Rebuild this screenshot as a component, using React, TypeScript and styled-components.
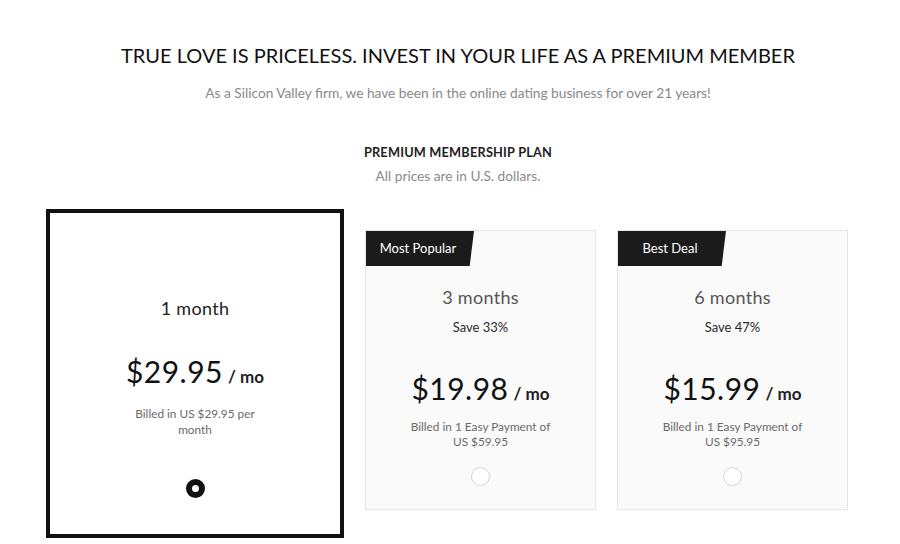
import React from "react";
import styled, { createGlobalStyle, css } from "styled-components";

const GlobalStyle = createGlobalStyle`
  html, body { margin: 0; padding: 0; background: #ffffff; }
  body { font-family: "Lato", "Open Sans", sans-serif; color: #222; }
`;

const Page = styled.div`
  width: 900px;
  height: 544px;
  overflow: hidden;
  background: #fff;
`;

const Header = styled.header`
  display: flex;
  flex-direction: column;
  align-items: center;
  padding: 42px 0 0 16px;
`;

const Headline = styled.h1`
  margin: 0;
  font-family: "Lato", sans-serif;
  font-weight: 400;
  font-size: 20px;
  line-height: 26px;
  color: #111;
`;

const Tagline = styled.p`
  margin: 17px 0 0;
  font-size: 13.7px;
  line-height: 16px;
  color: #888;
`;

const PlanTitle = styled.h2`
  margin: 43px 0 0;
  font-size: 12.75px;
  font-weight: 700;
  line-height: 16px;
  letter-spacing: 0.2px;
  color: #222;
`;

const PlanNote = styled.p`
  margin: 8px 0 0;
  font-size: 13.7px;
  line-height: 16px;
  color: #8a8a8a;
`;

const Cards = styled.div`
  display: flex;
  align-items: flex-start;
  gap: 21px;
  padding: 25px 0 0 46px;
`;

const Card = styled.div<{ $selected?: boolean }>`
  position: relative;
  box-sizing: border-box;
  display: flex;
  flex-direction: column;
  align-items: center;
  ${(p) =>
    p.$selected
      ? css`
          width: 298px;
          height: 329px;
          border: 4px solid #111;
          background: #fff;
          padding-top: 84px;
        `
      : css`
          width: 231px;
          height: 280px;
          margin-top: 21px;
          border: 1px solid #e6e6e6;
          background: #fafafa;
          padding-top: 55px;
        `}
`;

const Badge = styled.div`
  position: absolute;
  top: 0;
  left: 0;
  width: 108px;
  height: 35px;
  background: #1b1b1b;
  color: #fff;
  font-size: 13px;
  line-height: 35px;
  padding-right: 4px;
  box-sizing: border-box;
  text-align: center;
  clip-path: polygon(0 0, 100% 0, 96% 100%, 0 100%);
`;

const Term = styled.div<{ $selected?: boolean }>`
  font-size: 18px;
  line-height: 22px;
  color: ${(p) => (p.$selected ? "#222" : "#555")};
  letter-spacing: 0.3px;
`;

const Save = styled.div`
  margin-top: 10px;
  font-size: 13px;
  line-height: 18px;
  color: #2a2a2a;
`;

const PriceRow = styled.div`
  margin-top: 34px;
  display: flex;
  align-items: baseline;
  gap: 5px;
  line-height: 36px;
  color: #111;
`;

const Amount = styled.span`
  font-size: 30px;
  font-weight: 400;
  letter-spacing: 0.5px;
`;

const Unit = styled.span`
  font-size: 17px;
  font-weight: 700;
  color: #222;
`;

const Billed = styled.div<{ $selected?: boolean }>`
  margin-top: ${(p) => (p.$selected ? "11px" : "7px")};
  width: 150px;
  text-align: center;
  font-size: 11.8px;
  line-height: ${(p) => (p.$selected ? "16px" : "15px")};
  color: #6a6a6a;
`;

const Radio = styled.span<{ $selected?: boolean }>`
  display: block;
  box-sizing: border-box;
  width: 19px;
  height: 19px;
  border-radius: 50%;
  ${(p) =>
    p.$selected
      ? css`
          margin-top: 41px;
          border: 6px solid #111;
          background: #fff;
        `
      : css`
          margin-top: 18px;
          border: 1px solid #d4d4d4;
          background: #fff;
        `}
`;

type Plan = {
  term: string;
  save?: string;
  price: string;
  billed: string;
  badge?: string;
  selected?: boolean;
};

const plans: Plan[] = [
  { term: "1 month", price: "$29.95", billed: "Billed in US $29.95 per month", selected: true },
  { term: "3 months", save: "Save 33%", price: "$19.98", billed: "Billed in 1 Easy Payment of US $59.95", badge: "Most Popular" },
  { term: "6 months", save: "Save 47%", price: "$15.99", billed: "Billed in 1 Easy Payment of US $95.95", badge: "Best Deal" },
];

export default function App() {
  return (
    <Page>
      <GlobalStyle />
      <Header>
        <Headline>TRUE LOVE IS PRICELESS. INVEST IN YOUR LIFE AS A PREMIUM MEMBER</Headline>
        <Tagline>As a Silicon Valley firm, we have been in the online dating business for over 21 years!</Tagline>
        <PlanTitle>PREMIUM MEMBERSHIP PLAN</PlanTitle>
        <PlanNote>All prices are in U.S. dollars.</PlanNote>
      </Header>
      <Cards>
        {plans.map((p) => (
          <Card key={p.term} $selected={p.selected}>
            {p.badge && <Badge>{p.badge}</Badge>}
            <Term $selected={p.selected}>{p.term}</Term>
            {p.save && <Save>{p.save}</Save>}
            <PriceRow>
              <Amount>{p.price}</Amount>
              <Unit>/ mo</Unit>
            </PriceRow>
            <Billed $selected={p.selected}>{p.billed}</Billed>
            <Radio $selected={p.selected} />
          </Card>
        ))}
      </Cards>
    </Page>
  );
}
